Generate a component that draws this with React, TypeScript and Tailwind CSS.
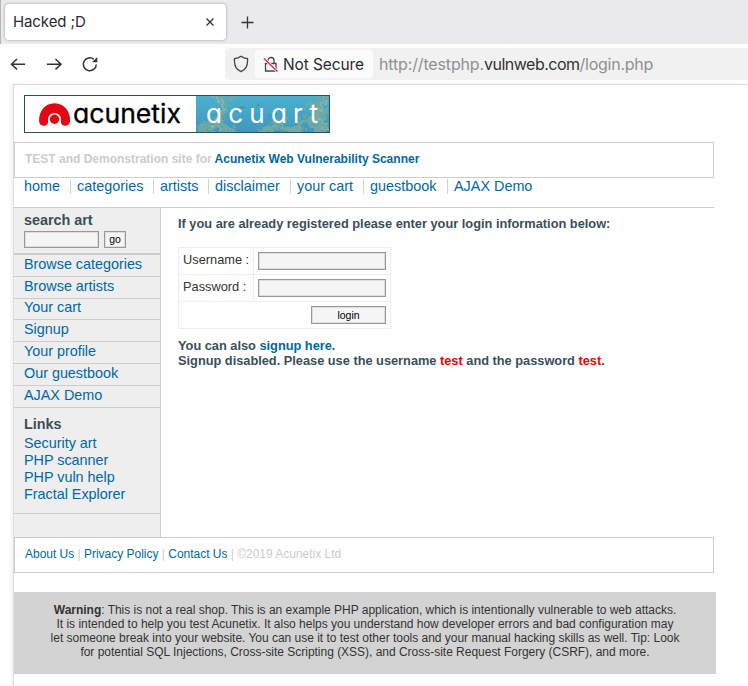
import React from "react";

const links = "text-[#0068a2]";

function Logo() {
  return (
    <svg width="306" height="38" viewBox="0 0 306 38" className="block">
      <defs>
        <linearGradient id="sea" x1="0" y1="0" x2="0" y2="1">
          <stop offset="0" stopColor="#4bb0cf" />
          <stop offset="1" stopColor="#3f98bc" />
        </linearGradient>
        <filter id="rough" x="-10%" y="-20%" width="120%" height="140%" colorInterpolationFilters="sRGB">
          <feTurbulence type="fractalNoise" baseFrequency="0.22" numOctaves="4" seed="7" />
          <feDisplacementMap in="SourceGraphic" scale="14" xChannelSelector="R" yChannelSelector="G" />
        </filter>
        <clipPath id="art"><rect x="172" y="1" width="133" height="36" /></clipPath>
      </defs>
      <rect x=".5" y=".5" width="305" height="37" fill="#fff" stroke="#2f4f58" />
      <rect x="172" y="1" width="133" height="36" fill="url(#sea)" />
      <g clipPath="url(#art)">
        <g filter="url(#rough)" fill="none" stroke="#6fa9a4" strokeLinecap="round">
          <path d="M190 1l10 4 9-4M201 5l-2 12-4 8 4 12M195 25l-20 6M175 37l20-6 13 4" strokeWidth="5" />
          <path d="M247 37l2-9 13-4M250 29l15 7M236 36l10-3M266 37l10-3" strokeWidth="5" />
          <path d="M306 1l-12 7-10 2M294 8l-3 15 10 12M291 23l-12 3-5 7M280 25l16 12M303 15l-8 10" strokeWidth="6" />
          <path d="M232 13l3-4M214 14l5-3M253 19l-9 4" strokeWidth="1.5" stroke="#4d8fa3" />
          <path d="M190 2l9 7-2 9-6 11 5 6M301 3l-8 19 10 10" stroke="#8fb8a2" strokeWidth="2" />
        </g>
      </g>
      <path d="M15.100 26.500C14.500 17 20.500 8.300 30.500 8.300S46.700 17 46.100 26.500C45.800 31.800 37.500 32 37 27.500L24 27.500C23.500 32 15.400 31.800 15.100 26.500Z" fill="#e30613" />
      <path d="M24 29V24.400a6.500 6.500 0 0 1 13 0V29z" fill="#fff" />
      <circle cx="30.500" cy="24.200" r="4.700" fill="#e30613" />
      <text x="49" y="28" textLength="108" lengthAdjust="spacingAndGlyphs" fill="#000" className="font-['Inter'] text-[26px] font-normal [font-feature-settings:'cv11'_1]" stroke="#000" strokeWidth=".3">acunetix</text>
      <text x="182" y="28" textLength="112" fill="#fff" className="font-['Inter'] text-[26px] font-normal [font-feature-settings:'cv11'_1]">acuart</text>
    </svg>
  );
}

function Browser() {
  return (
    <header className="font-['Inter',sans-serif] text-[#2b2a33]">
      <div className="flex h-11 border-l border-[#b5b5b9] bg-[#eaeaec] pl-1 pt-1">
        <div className="flex h-9 w-[221px] items-center justify-between rounded-[4px] bg-white pl-2 pr-[11px] shadow-[0_0_3px_rgba(0,0,0,.35)]">
          <span className="text-[15px] leading-5 tracking-[-0.1px] whitespace-nowrap">Hacked ;D</span>
          <svg width="10" height="10" viewBox="0 0 10 10" fill="none" stroke="#333" strokeWidth="1.3"><path d="M1.500 1.500l7 7M8.500 1.500l-7 7" /></svg>
        </div>
        <svg className="ml-[15px] mt-3" width="13" height="13" viewBox="0 0 13 13" fill="none" stroke="#333" strokeWidth="1.3"><path d="M6.5 .5v12M.5 6.5h12" /></svg>
      </div>
      <div className="flex h-10 items-center bg-white pl-[10px]">
        <svg width="90" height="20" viewBox="0 0 90 20" fill="none" stroke="#333338" strokeWidth="1.5">
          <path d="M7 5L1.5 10.2 7 15.4M1.5 10.2H15M45.5 5l5.500 5.200-5.500 5.200M51 10.200H37" />
          <path d="M86.300 10.500a6.500 6.500 0 1 1-2.400-5.300" />
          <path d="M87.300 3v5.300H82z" fill="#333338" stroke="none" />
        </svg>
        <div className="ml-[125px] flex h-8 flex-1 items-center overflow-hidden rounded-l-[4px] bg-[#f1f1f1] pl-2">
          <svg width="16" height="18" viewBox="0 0 16 18" fill="none" stroke="#444" strokeWidth="1.3"><path d="M8 1.200c2 1.500 4.200 2.200 6.500 2.500.5 5.500-.8 10.600-6.500 13C2.300 14.300 1 9.200 1.500 3.700 3.800 3.400 6 2.700 8 1.200z" /></svg>
          <div className="ml-[6px] flex h-7 w-[118px] items-center rounded-[4px] bg-[#fbfbfb] pl-2">
            <svg width="16" height="17" viewBox="0 0 16 17" fill="none" stroke="#444" strokeWidth="1.3"><path d="M5 7V4.500a3 3 0 0 1 6 0V7M2.500 7.500h10.500v7.500H2.500z" /><path d="M1 2.500l13.500 13" stroke="#fbfbfb" strokeWidth="3" /><path d="M1 2.500l13.500 13" stroke="#e22850" strokeWidth="1.400" /></svg>
            <span className="relative top-px ml-1 text-[15.500px] tracking-[-0.1px] whitespace-nowrap">Not Secure</span>
          </div>
          <span className="ml-[6px] whitespace-nowrap text-[16px] tracking-[-0.150px] text-[#909090]">http://testphp.<span className="tracking-[-0.500px] text-[#333]">vulnweb.com</span><span className="tracking-[-0.250px]">/login.php</span></span>
        </div>
      </div>
    </header>
  );
}

const nav: [string, string][] = [["home", "w-[47px]"], ["categories", "w-[83px]"], ["artists", "w-[55px]"], ["disclaimer", "w-[82px]"], ["your cart", "w-[73px]"], ["guestbook", "w-[84px]"], ["AJAX Demo", "w-[90px]"]];

const menu: [string, string][] = [["Browse categories", "h-[22px] leading-[19px]"], ["Browse artists", "h-[22px] leading-[19px]"], ["Your cart", "h-[21px] leading-[17px]"], ["Signup", "h-[22px] leading-[19px]"], ["Your profile", "h-[22px] leading-[19px]"], ["Our guestbook", "h-[22px] leading-[19px]"], ["AJAX Demo", "h-[22px] leading-[19px]"]];

const field = "border border-[#989898] bg-[#f5f5f5] shadow-[inset_-1px_-1px_0_#ddd,inset_1px_1px_0_#ddd]";

function Sidebar() {
  return (
    <aside className="h-[329px] w-[147px] border-r border-[#ccc] bg-[#eee] text-[14.400px] tracking-[-0.020px]">
      <div className="h-[47px] border-b-2 border-[#ccc] pl-[10px] pt-[3px]">
        <h3 className="font-bold leading-[18px] text-[#38505a]">search art</h3>
        <div className="mt-[2px] flex gap-[5px]">
          <input className={`block h-[17px] w-[75px] ${field}`} />
          <button className={`h-[17px] w-[22px] text-[10.500px] leading-[13px] text-black ${field}`}>go</button>
        </div>
      </div>
      {menu.map(([label, h]) => (
        <a key={label} className={`block border-b border-[#ccc] pl-[10px] ${h} ${links}`}>{label}</a>
      ))}
      <div className="h-[106px] border-b border-[#ccc] pl-[10px] pt-[7px]">
        <h3 className="mb-px font-bold leading-[19px] text-[#38505a]">Links</h3>
        {["Security art", "PHP scanner", "PHP vuln help", "Fractal Explorer"].map((l) => (
          <a key={l} className={`block leading-[17px] ${links}`}>{l}</a>
        ))}
      </div>
    </aside>
  );
}

function Login() {
  return (
    <main className="pl-[17px] pt-2 text-[12.800px] font-bold leading-[15px] text-[#38505a]">
      <p className="whitespace-nowrap">If you are already registered please enter your login information below:</p>
      <table className="mt-4 w-[213px] table-fixed border-collapse font-normal text-[#333]">
        <colgroup><col className="w-[75px]" /><col /></colgroup>
        <tbody>
          {["Username :", "Password :"].map((l) => (
            <tr key={l} className="h-[27px]">
              <td className="border border-[#eee] pb-[3px] pl-1 whitespace-nowrap">{l}</td>
              <td className="border border-[#eee] pl-1"><input className={`block h-[18px] w-[128px] ${field}`} /></td>
            </tr>
          ))}
          <tr className="h-[27px]">
            <td colSpan={2} className="border border-[#eee] pr-1"><button className={`ml-auto block h-[18px] w-[75px] text-[10.500px] leading-[13px] text-black ${field}`}>login</button></td>
          </tr>
        </tbody>
      </table>
      <p className="mt-[9px] whitespace-nowrap tracking-[-0.010px]">
        You can also <a className={links}>signup here</a>.<br />
        Signup disabled. Please use the username <span className="text-[#f00000]">test</span> and the password <span className="text-[#f00000]">test</span>.
      </p>
    </main>
  );
}

export default function App() {
  return (
    <div className="h-[686px] w-[748px] overflow-hidden bg-white">
      <Browser />
      <div className="ml-[13px] h-[602px] border-l border-t border-[#dedee0] font-['Liberation_Sans',Arial,sans-serif] shadow-[-2px_0_4px_rgba(0,0,0,.06)]">
        <div className="h-[57px] pl-[10px] pt-[10px]"><Logo /></div>
        <div className="h-9 w-[700px] border border-[#ccc] pl-[10px] pt-2 text-[12px] font-bold leading-4 text-[#ccc]">
          TEST and Demonstration site for <a className={links}>Acunetix Web Vulnerability Scanner</a>
        </div>
        <nav className="flex h-[30px] w-[700px] border-b border-[#ccc] pl-[10px] pt-[1px] text-[14.400px] leading-[14px]">
          {nav.map(([label, w], i) => (
            <a key={label} className={`h-[15px] whitespace-nowrap ${w} ${links} ${i > 0 ? "pl-[6px]" : ""} ${i < nav.length - 1 ? "border-r border-[#d8d4d4]" : ""}`}>{label}</a>
          ))}
        </nav>
        <div className="flex w-[700px]"><Sidebar /><Login /></div>
        <footer className="h-9 w-[700px] border border-[#ccc] pl-[10px] pt-2 text-[12px] leading-4 tracking-[-0.015px] text-[#ccc]">
          <a className={links}>About Us</a> | <a className={links}>Privacy Policy</a> | <a className={links}>Contact Us</a> | ©2019 Acunetix Ltd
        </footer>
        <div className="mt-[19px] h-[82px] w-[702px] bg-[#d3d3d3] pt-[11px] text-center text-[12px] leading-[14px] tracking-[-0.018px] text-[#333]">
          <p className="whitespace-nowrap"><b>Warning</b>: This is not a real shop. This is an example PHP application, which is intentionally vulnerable to web attacks.<br />It is intended to help you test Acunetix. It also helps you understand how developer errors and bad configuration may<br />let someone break into your website. You can use it to test other tools and your manual hacking skills as well. Tip: Look<br />for potential SQL Injections, Cross-site Scripting (XSS), and Cross-site Request Forgery (CSRF), and more.</p>
        </div>
      </div>
    </div>
  );
}
